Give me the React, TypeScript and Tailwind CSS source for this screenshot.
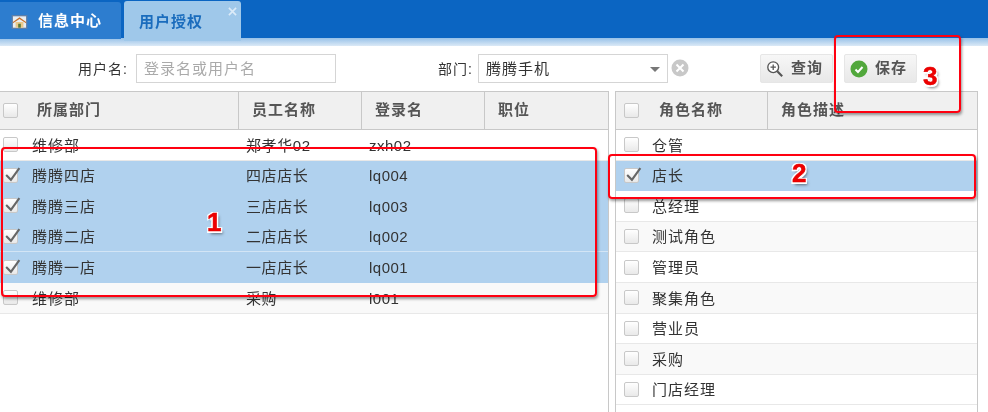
const font = { fontFamily: '"Liberation Sans", "Noto Sans CJK SC", sans-serif' };

const leftRows = [
  { d: '维修部', n: '郑孝华02', l: 'zxh02', s: false },
  { d: '腾腾四店', n: '四店店长', l: 'lq004', s: true },
  { d: '腾腾三店', n: '三店店长', l: 'lq003', s: true },
  { d: '腾腾二店', n: '二店店长', l: 'lq002', s: true },
  { d: '腾腾一店', n: '一店店长', l: 'lq001', s: true },
  { d: '维修部', n: '采购', l: 'l001', s: false },
];
const roles = ['仓管', '店长', '总经理', '测试角色', '管理员', '聚集角色', '营业员', '采购', '门店经理'];

function Check({ checked }: { checked?: boolean }) {
  return (
    <span className="relative block h-[15px] w-[15px] shrink-0 rounded-[2px] border border-[#c8c8c8] bg-gradient-to-b from-[#ffffff] to-[#e9e9e9]">
      {checked && (
        <svg viewBox="0 0 18 16" className="absolute left-[-1px] top-[-4px] h-[18px] w-[19px]">
          <path d="M3 9 L7.5 13.5 L15.5 2.5" fill="none" stroke="#666" strokeWidth="2" />
        </svg>
      )}
    </span>
  );
}

function HeaderCell({ w, children, last }: { w: string; children?: React.ReactNode; last?: boolean }) {
  return (
    <div className={`flex h-full items-center font-bold text-[#555] ${w} ${last ? '' : 'border-r border-[#c8c8c8]'}`}>
      {children}
    </div>
  );
}

function Row({ i, selected, divider, children }: { i: number; selected?: boolean; divider?: boolean; children: React.ReactNode }) {
  const bg = selected
    ? divider
      ? 'bg-[#b0d1ee] border-[#d3e5f5]'
      : 'bg-[#b0d1ee] border-[#b0d1ee]'
    : i % 2 === 1
      ? 'bg-[#f9f9f9] border-[#e8e8e8]'
      : 'bg-white border-[#e8e8e8]';
  return <div className={`flex h-[30.6px] items-center border-b ${bg}`}>{children}</div>;
}

function Box({ className }: { className: string }) {
  return (
    <div className={`pointer-events-none absolute rounded-[4px] border-2 border-[#ff0010] shadow-[1px_2px_3px_rgba(0,0,0,0.4)] ${className}`} />
  );
}

function Num({ className, children }: { className: string; children: React.ReactNode }) {
  return (
    <div className={`pointer-events-none absolute text-[26px] leading-[26px] font-bold text-[#ee0000] [-webkit-text-stroke:0.5px_#e00000] [text-shadow:-1.5px_-1.5px_0_#fff,1.5px_-1.5px_0_#fff,-1.5px_1.5px_0_#fff,1.5px_1.5px_0_#fff,2px_3px_3px_rgba(0,0,0,0.5)] ${className}`}>
      {children}
    </div>
  );
}

export default function App() {
  return (
    <div style={font} className="relative h-[412px] w-[988px] overflow-hidden bg-white text-[15px] tracking-[1px] text-[#333] blur-[0.35px]">
      {/* Tabs */}
      <div className="flex h-[38px] items-start bg-[#0b65c2]">
        <div className="mt-[2px] flex h-[37px] w-[121px] items-center rounded-tr-[3px] bg-[#2d7dcf] pl-[11px] pt-[2px] font-bold text-white">
          <svg viewBox="0 0 18 16" className="mr-[10px] h-[14px] w-[17px]">
            <rect x="0" y="0" width="18" height="16" fill="#5f7fa8" />
            <rect x="1.5" y="1.5" width="15" height="13" fill="#e9eef2" />
            <path d="M1.5 8 L9 2.5 L16.5 8 L16.5 9.5 L9 4.5 L1.5 9.5 Z" fill="#c8702a" />
            <rect x="4.5" y="8" width="9" height="6.5" fill="#e9c98a" />
            <rect x="7.5" y="10" width="3" height="4.5" fill="#5a7a3a" />
          </svg>
          信息中心
        </div>
        <div className="relative ml-[3px] mt-[1px] flex h-[40px] w-[117px] items-center rounded-t-[3px] bg-[#9fc8ea] pl-[15px] pt-[2px] font-bold text-[#1a6cbd]">
          用户授权
          <svg viewBox="0 0 10 10" className="absolute right-[4px] top-[6px] h-[9px] w-[9px]">
            <path d="M1 1 L9 9 M9 1 L1 9" stroke="#dcebf8" strokeWidth="1.8" />
          </svg>
        </div>
      </div>
      <div className="h-[8px] bg-gradient-to-b from-[#97c1e8] to-[#dbe9f6]" />

      {/* Toolbar */}
      <div className="flex h-[45px] items-center pb-[1px]">
        <span className="ml-[78px] w-[58px] pt-[2px] text-[14px] tracking-[1px]">用户名:</span>
        <div className="flex h-[29px] w-[200px] items-center border border-[#d5d5d5] pl-[7px] pt-[2px] text-[#aaa]">登录名或用户名</div>
        <span className="ml-[102px] w-[40px] pt-[2px] text-[14px] tracking-[1px]">部门:</span>
        <div className="flex h-[29px] w-[190px] items-center justify-between border border-[#d5d5d5] pl-[7px] pr-[7px] pt-[2px]">
          腾腾手机
          <span className="h-0 w-0 border-x-[5px] border-t-[5px] border-x-transparent border-t-[#777]" />
        </div>
        <svg viewBox="0 0 18 18" className="ml-[3px] h-[18px] w-[18px]">
          <circle cx="9" cy="9" r="8.5" fill="#c8c8c8" />
          <path d="M5.5 5.5 L12.5 12.5 M12.5 5.5 L5.5 12.5" stroke="#fff" strokeWidth="2" />
        </svg>
        <div className="ml-[71px] flex h-[29px] w-[73px] items-center rounded-[2px] border border-[#e6e6e6] bg-gradient-to-b from-[#f7f7f7] to-[#e8e8e8] pl-[5px] pt-[1px] font-bold text-[#555]">
          <svg viewBox="0 0 20 20" className="mr-[7px] h-[18px] w-[18px]">
            <circle cx="8" cy="8" r="6" fill="#fff" stroke="#555" strokeWidth="1.5" />
            <path d="M5 8 H11 M8 5 V11" stroke="#555" strokeWidth="1.4" />
            <path d="M12.5 12.5 L18 18" stroke="#555" strokeWidth="2.4" />
          </svg>
          查询
        </div>
        <div className="ml-[11px] flex h-[29px] w-[73px] items-center rounded-[2px] border border-[#e6e6e6] bg-gradient-to-b from-[#f7f7f7] to-[#e8e8e8] pl-[5px] pt-[1px] font-bold text-[#555]">
          <svg viewBox="0 0 18 18" className="mr-[7px] h-[18px] w-[18px]">
            <circle cx="9" cy="9" r="8.5" fill="#52a83c" />
            <path d="M5.5 9.5 L8 12 L12.5 7" fill="none" stroke="#fff" strokeWidth="2" />
          </svg>
          保存
        </div>
      </div>

      {/* Grids */}
      <div className="flex h-[321px]">
        <div className="w-[609px] border-r border-[#c8c8c8]">
          <div className="flex h-[39px] border-y border-[#c8c8c8] bg-[#f0f0f0]">
            <HeaderCell w="w-[239px]">
              <span className="ml-[3px] mr-[19px]"><Check /></span>所属部门
            </HeaderCell>
            <HeaderCell w="w-[123px]"><span className="ml-[13px]">员工名称</span></HeaderCell>
            <HeaderCell w="w-[123px]"><span className="ml-[13px]">登录名</span></HeaderCell>
            <HeaderCell w="w-[123px]" last><span className="ml-[13px]">职位</span></HeaderCell>
          </div>
          {leftRows.map((r, i) => (
            <Row key={i} i={i} selected={r.s} divider={i === 3}>
              <span className="ml-[3px] mr-[14px]"><Check checked={r.s} /></span>
              <span className="w-[214px] pt-[2px]">{r.d}</span>
              <span className="w-[123px] pt-[2px] tracking-[0.6px]">{r.n}</span>
              <span className="pt-[2px] tracking-[0.5px]">{r.l}</span>
            </Row>
          ))}
        </div>
        <div className="ml-[6px] w-[363px] border-x border-[#c8c8c8]">
          <div className="flex h-[39px] border-y border-[#c8c8c8] bg-[#f0f0f0]">
            <HeaderCell w="w-[152px]">
              <span className="ml-[8px] mr-[20px]"><Check /></span>角色名称
            </HeaderCell>
            <HeaderCell w="w-[209px]" last><span className="ml-[13px]">角色描述</span></HeaderCell>
          </div>
          {roles.map((r, i) => (
            <Row key={r} i={i} selected={i === 1}>
              <span className="ml-[8px] mr-[13px]"><Check checked={i === 1} /></span>
              <span className="pt-[2px]">{r}</span>
            </Row>
          ))}
        </div>
      </div>

      {/* Annotations */}
      <Box className="left-[1px] top-[147px] h-[150px] w-[596px]" />
      <Box className="left-[608px] top-[154px] h-[45px] w-[368px]" />
      <Box className="left-[834px] top-[35px] h-[78px] w-[127px]" />
      <Num className="left-[207px] top-[209px]">1</Num>
      <Num className="left-[792px] top-[160px]">2</Num>
      <Num className="left-[923px] top-[63px]">3</Num>
    </div>
  );
}
